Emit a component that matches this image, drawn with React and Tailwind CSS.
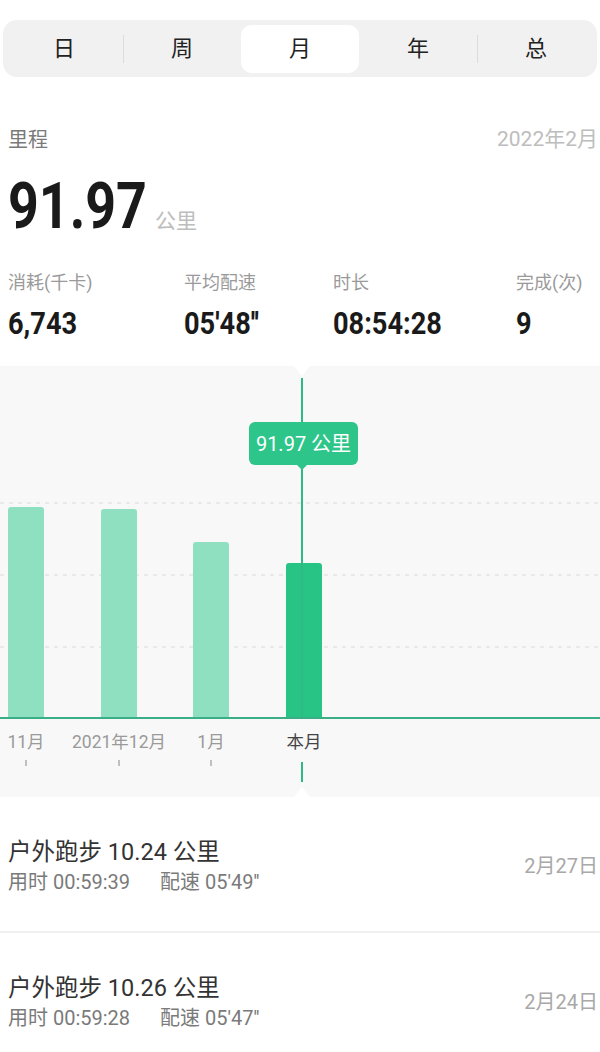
import React from "react";

const CN = "font-['Roboto','Noto_Sans_CJK_SC',sans-serif]";

function Segmented() {
  const tabs = ["日", "周", "月", "年", "总"];
  return (
    <div className="px-[3px] pt-[20px]">
      <div className="flex h-[57px] items-center rounded-[14px] bg-[#f1f1f1] px-[2px]">
        {tabs.map((t, i) => {
          const active = t === "月";
          const showDivider = i === 1 || i === 4;
          return (
            <div key={t} className="relative flex h-[48px] flex-1 items-center justify-center">
              {showDivider && (
                <div className="absolute left-0 top-[10px] h-[28px] w-px bg-[#dcdcdc]" />
              )}
              <div
                className={
                  "flex h-full w-full items-center justify-center rounded-[11px] text-[22px] text-[#222] " +
                  (active ? "bg-white" : "")
                }
              >
                {t}
              </div>
            </div>
          );
        })}
      </div>
    </div>
  );
}

function Summary() {
  const stats = [
    { label: "消耗(千卡)", value: "6,743" },
    { label: "平均配速", value: "05'48''" },
    { label: "时长", value: "08:54:28" },
    { label: "完成(次)", value: "9" },
  ];
  return (
    <div className="px-[8px]">
      <div className="mt-[49px] flex h-[28px] items-center justify-between">
        <span className="text-[20px] text-[#7a7a7a]">里程</span>
        <span className="mr-[-6px] text-[21px] text-[#bdbdbd]">2022年2月</span>
      </div>
      <div className="mt-[21px] flex h-[64px] items-baseline leading-[64px]">
        <div className="w-[136px] whitespace-nowrap">
          <span className="inline-block origin-left scale-x-[0.84] text-[64px] font-bold text-[#1a1a1a]">91.97</span>
        </div>
        <span className="ml-[11px] text-[21px] leading-[28px] text-[#bdbdbd]">公里</span>
      </div>
      <div className="mt-[32px] grid grid-cols-[176px_149px_183px_1fr]">
        {stats.map((s) => (
          <div key={s.label} className="flex flex-col">
            <span className="text-[18px] leading-[24px] text-[#9a9a9a]">{s.label}</span>
            <span className="mt-[12px] whitespace-nowrap text-[32px] font-bold leading-[32px] text-[#1a1a1a]">
              <span className="inline-block origin-left scale-x-[0.85]">{s.value}</span>
            </span>
          </div>
        ))}
      </div>
    </div>
  );
}

function Chart() {
  const bars = [
    { x: 8, top: 141, label: "11月", cx: 26 },
    { x: 101, top: 143, label: "2021年12月", cx: 119 },
    { x: 193, top: 176, label: "1月", cx: 211 },
    { x: 286, top: 197, label: "本月", cx: 304, current: true },
  ];
  return (
    <div className="relative mt-[27px] h-[431px] bg-[#f8f8f8]">
      <svg className="absolute inset-0" width="600" height="431" viewBox="0 0 600 431">
        {[137, 209, 281].map((y) => (
          <line key={y} x1="0" x2="600" y1={y} y2={y} stroke="#dadada" strokeWidth="1.2" strokeDasharray="4 5" />
        ))}
        {bars.map((b) => (
          <path
            key={b.label}
            d={`M${b.x} ${352} V${b.top + 3} Q${b.x} ${b.top} ${b.x + 3} ${b.top} H${b.x + 33} Q${b.x + 36} ${b.top} ${b.x + 36} ${b.top + 3} V352 Z`}
            fill={b.current ? "#27c486" : "#8fe0c1"}
          />
        ))}
        <line x1="302" x2="302" y1="12" y2="352" stroke="#2fb985" strokeWidth="2" />
        <line x1="0" x2="600" y1="352" y2="352" stroke="#3aae86" strokeWidth="2" />
        {[26, 119, 211].map((x) => (
          <line key={x} x1={x} x2={x} y1="394" y2="400" stroke="#9a9a9a" strokeWidth="1.2" />
        ))}
        <line x1="302" x2="302" y1="396" y2="416" stroke="#2fb985" strokeWidth="2" />
        <polygon points="294,0 310,0 302,10" fill="#ffffff" />
        <polygon points="294,431 310,431 302,421" fill="#ffffff" />
      </svg>
      <div className="absolute left-[249px] top-[56px] flex h-[43px] w-[109px] items-center justify-center rounded-[6px] bg-[#2dc589] text-[20px] text-white">
        91.97 公里
        <div className="absolute bottom-[-5px] left-[48px] h-0 w-0 border-l-[5px] border-r-[5px] border-t-[5px] border-l-transparent border-r-transparent border-t-[#2dc589]" />
      </div>
      {bars.map((b) => (
        <div
          key={b.label}
          className={
            "absolute top-[364px] w-[120px] whitespace-nowrap text-center text-[17.5px] leading-[24px] " +
            (b.current ? "text-[#444]" : "text-[#9a9a9a]")
          }
          style={{ left: b.cx - 60 }}
        >
          {b.label}
        </div>
      ))}
    </div>
  );
}

function RunItem({ title, time, pace, date }) {
  return (
    <div className="flex h-[134px] items-center justify-between px-[8px] pt-[4px]">
      <div className="flex flex-col">
        <span className="text-[23.5px] leading-[32px] text-[#333]">{title}</span>
        <span className="text-[20px] leading-[28px] text-[#7a7a7a]">
          用时 {time}
          <span className="ml-[30px]">配速 {pace}</span>
        </span>
      </div>
      <span className="mr-[-6px] text-[20px] text-[#a8a8a8]">{date}</span>
    </div>
  );
}

export default function App() {
  return (
    <div className={CN + " h-[1052px] w-[600px] overflow-hidden bg-white"}>
      <Segmented />
      <Summary />
      <Chart />
      <RunItem title="户外跑步 10.24 公里" time="00:59:39" pace="05'49''" date="2月27日" />
      <div className="h-[2px] bg-[#f0f0f0]" />
      <RunItem title="户外跑步 10.26 公里" time="00:59:28" pace="05'47''" date="2月24日" />
    </div>
  );
}
